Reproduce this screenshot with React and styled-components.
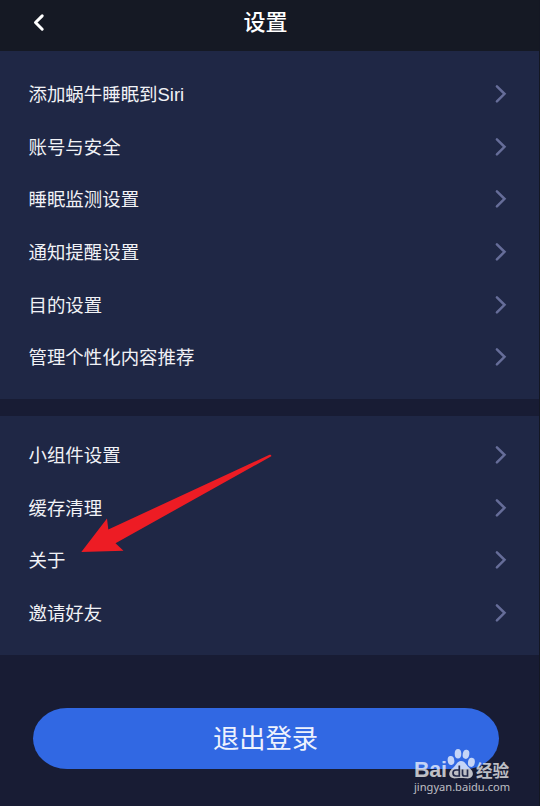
import React from "react";
import styled, { createGlobalStyle } from "styled-components";

const GlobalStyle = createGlobalStyle`
  * { box-sizing: border-box; }
  body { margin: 0; background: #181c34; }
`;

const Screen = styled.div`
  position: relative;
  width: 540px;
  height: 806px;
  overflow: hidden;
  display: flex;
  flex-direction: column;
  background: #181c34;
  border-right: 1px solid #141722;
  font-family: "Liberation Sans", "Noto Sans CJK SC", sans-serif;
  color: #f1f2f6;
`;

const Header = styled.header`
  flex: none;
  height: 51px;
  padding: 0 32px 6px;
  display: grid;
  grid-template-columns: 14px 1fr 22px;
  align-items: center;
  background: #151924;
`;

const Title = styled.h1`
  margin: 0;
  padding-top: 1px;
  text-align: center;
  font-size: 22px;
  line-height: 32px;
  font-weight: 500;
  color: #ffffff;
`;

const BackButton = styled.button`
  display: flex;
  padding: 0;
  border: 0;
  background: none;
`;

const Group = styled.section`
  flex: none;
  height: ${(p) => p.$height}px;
  padding: ${(p) => p.$top}px 32px 0 28.5px;
  margin-bottom: ${(p) => p.$gap || 0}px;
  background: #1f2745;
`;

const Row = styled.div`
  height: 52.7px;
  display: flex;
  align-items: center;
  justify-content: space-between;
`;

const Label = styled.span`
  padding-top: 2px;
  font-size: 18.45px;
  line-height: 28px;
  font-weight: 400;
  white-space: nowrap;
`;

const LogoutButton = styled.button`
  flex: none;
  width: 466px;
  height: 61px;
  margin: 53px 0 0 33px;
  padding: 0 1px 3px 0;
  border: 0;
  border-radius: 34px / 30.5px;
  background: #3168e3;
  color: #eef2fd;
  font: 400 26.3px/38px "Noto Sans CJK SC", sans-serif;
`;

const ArrowOverlay = styled.svg`
  position: absolute;
  left: 80px;
  top: 452px;
`;

const Watermark = styled.div`
  position: absolute;
  left: 414px;
  top: 748px;
  width: 100px;
  color: rgba(255, 255, 255, 0.72);
`;

const Brand = styled.div`
  height: 32px;
  display: flex;
  align-items: flex-end;
`;

const BrandLatin = styled.span`
  width: 33px;
  font: 700 21.5px/19px "Liberation Sans", sans-serif;
  letter-spacing: -0.3px;
`;

const BrandChinese = styled.span`
  margin-left: 1px;
  font: 700 16.6px/19px "Noto Sans CJK SC", sans-serif;
  white-space: nowrap;
`;

const SiteAddress = styled.div`
  font: 400 11.1px/14px "Noto Sans", sans-serif;
  white-space: nowrap;
`;

const Chevron = () => (
  <svg width="12" height="20" viewBox="0 0 12 20" fill="none" stroke="#666d99" strokeWidth="2.5" strokeLinecap="round">
    <path d="M1.900 2.300 9.500 9.800 1.900 17.300" />
  </svg>
);

const Paw = () => (
  <svg width="28" height="32" viewBox="0 0 28 32" fill="currentColor">
    <ellipse cx="4" cy="12.500" rx="3.3" ry="4.5" transform="rotate(-8 4 12.500)" />
    <ellipse cx="11" cy="5.800" rx="3.3" ry="4.8" />
    <ellipse cx="19" cy="6.300" rx="3.3" ry="4.6" transform="rotate(10 19 6.300)" />
    <ellipse cx="24.4" cy="14.300" rx="3.400" ry="4.600" transform="rotate(8 24.4 14.300)" />
    <path d="M14 13c4 0 5 4 8.500 7 3 2.600 4 5 3 7.500-1 2.700-4 3.200-7 2.800-3-.4-6-.4-9 0-4 .5-7-.8-7.300-4-.2-2.600 1.800-4.800 4-6.500 3-2.600 4-6.800 7.800-6.800Z" />
    <g fill="none" stroke="#22294a" strokeWidth="1.7">
      <path d="M12.300 17.500v10.500H9a2.700 2.700 0 0 1 0-6h3.300M15.500 21.500V26q0 2 2 2h3v-6.500" />
    </g>
  </svg>
);

const groups = [
  {
    top: 16.5,
    height: 348,
    gap: 17,
    items: ["添加蜗牛睡眠到Siri", "账号与安全", "睡眠监测设置", "通知提醒设置", "目的设置", "管理个性化内容推荐"],
  },
  { top: 12.5, height: 239, items: ["小组件设置", "缓存清理", "关于", "邀请好友"] },
];

export default function App() {
  return (
    <>
      <GlobalStyle />
      <Screen>
        <Header>
          <BackButton aria-label="返回">
            <svg width="14" height="20" viewBox="0 0 14 20" fill="none" stroke="#fff" strokeWidth="3" strokeLinecap="round" strokeLinejoin="round">
              <path d="M10.200 2.900 3.500 9.500l6.700 6.700" />
            </svg>
          </BackButton>
          <Title>设置</Title>
        </Header>
        {groups.map((group) => (
          <Group key={group.items[0]} $top={group.top} $height={group.height} $gap={group.gap}>
            {group.items.map((item) => (
              <Row key={item}>
                <Label>{item}</Label>
                <Chevron />
              </Row>
            ))}
          </Group>
        ))}
        <LogoutButton>退出登录</LogoutButton>
        <ArrowOverlay width="194" height="102" viewBox="0 0 194 102">
          <path fill="#ed1c24" d="M1.300 100 27 66.500l1.300 11L189.500 2.800q2-.5 1.800 1.500L35.500 91.200l8 7.500Z" />
        </ArrowOverlay>
        <Watermark>
          <Brand>
            <BrandLatin>Bai</BrandLatin>
            <Paw />
            <BrandChinese>经验</BrandChinese>
          </Brand>
          <SiteAddress>jingyan.baidu.com</SiteAddress>
        </Watermark>
      </Screen>
    </>
  );
}
